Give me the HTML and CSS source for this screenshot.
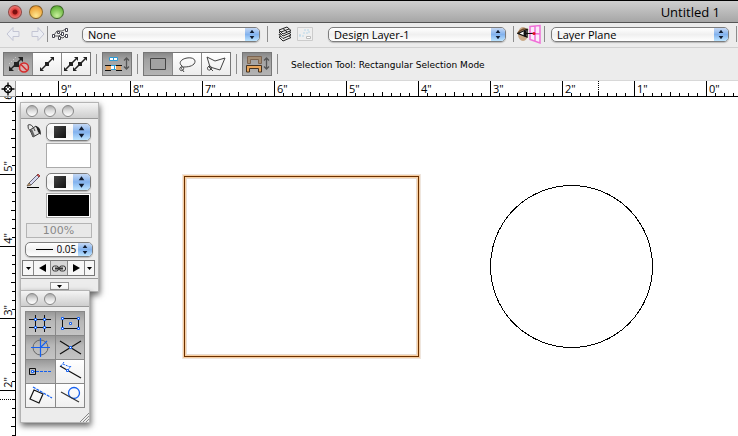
FILE: index.html
```html
<!DOCTYPE html>
<html lang="en">
<head>
  <meta charset="UTF-8">
  <meta name="viewport" content="width=device-width, initial-scale=1.0">
  <title>Untitled 1</title>
  <link rel="stylesheet" href="styles.css">
</head>
<body>
  <!-- Shared symbols -->
  <svg class="symbols" aria-hidden="true">
    <symbol id="arrows" viewBox="0 0 15 13">
      <path d="M7.5 1.500 L10 5 H5 Z M7.5 11.500 L10 8 H5 Z" fill="#101c30"/>
    </symbol>
    <symbol id="down" viewBox="0 0 7 4">
      <path d="M0 0 H7 L3.500 4 Z" fill="#000"/>
    </symbol>
    <symbol id="resize-arrow" viewBox="0 0 7 15">
      <path d="M3.500 2 V13 M1 4.500 L3.500 2 L6 4.500 M1 10.500 L3.500 13 L6 10.500" fill="none" stroke="#555" stroke-width="1.300"/>
    </symbol>
  </svg>

  <header class="title-bar">
    <div class="lights">
      <button class="light red" aria-label="Close"></button>
      <button class="light yellow" aria-label="Minimize"></button>
      <button class="light green" aria-label="Zoom"></button>
    </div>
    <h1 class="title">Untitled 1</h1>
  </header>

  <!-- Class / layer / plane bar -->
  <nav class="view-bar">
    <div class="nav-arrows">
      <button class="plain" aria-label="Previous view">
        <svg width="15" height="16" viewBox="0 0 15 16"><path d="M1 8 L7 1.500 V5.500 H13 V10.500 H7 V14.500 Z" fill="#eceef3" stroke="#c3c5d4"/></svg>
      </button>
      <button class="plain" aria-label="Next view">
        <svg width="15" height="16" viewBox="0 0 15 16"><path d="M14 8 L8 1.500 V5.500 H2 V10.500 H8 V14.500 Z" fill="#eceef3" stroke="#c3c5d4"/></svg>
      </button>
    </div>
    <span class="divider"></span>
    <button class="plain classes" aria-label="Classes">
      <svg width="18" height="14" viewBox="0 0 18 14">
        <path d="M3 8 L6 4 H11 L15 2 M4 9 L8 9 L10 7 M8 10 L12 11 L15 8 M11 5 V9" fill="none" stroke="#555"/>
        <g fill="#fff" stroke="#44444f"><path d="M1.500 7.500h2v3h-2z M6.500 4.500h2v2h-2z M7.500 9.500h2v3h-2z M10.500 5.500h2v3h-2z M14.500 1.500h2v3h-2z M14.500 7.500h2v3h-2z"/></g>
      </svg>
    </button>
    <span class="popup">
      <select aria-label="Class"><option>None</option></select>
      <svg class="cap"><use href="#arrows"/></svg>
    </span>
    <span class="divider"></span>
    <div class="layer-icons">
      <button class="plain" aria-label="Layers">
        <svg width="15" height="16" viewBox="0 0 15 16">
          <g fill="#eee" stroke="#222">
            <path d="M1 11 L9 8 L13 11.500 L5 15 Z"/>
            <path d="M1 8.500 L9 5.500 L13 9 L5 12.500 Z"/>
            <path d="M1 6 L9 3 L13 6.500 L5 10 Z"/>
            <path d="M1 4 L9 1 L13 4.500 L5 8 Z"/>
            <path d="M5 2.500 L9 6 M3 6 L11 3"/>
          </g>
        </svg>
      </button>
      <button class="plain" aria-label="Saved views">
        <svg width="16" height="14" viewBox="0 0 16 14">
          <path d="M.5 .5h15v13H.5z" fill="#efefef" stroke="#ccc"/>
          <path d="M9.500 9.500h4v2h-4z" fill="#fff" stroke="#bbb"/>
          <path d="M2 9 H8 M3 9 V6 M6 6 H12 V3 H7" fill="none" stroke="#b9d8ea" stroke-dasharray="2 1"/>
        </svg>
      </button>
    </div>
    <span class="popup">
      <select aria-label="Layer"><option>Design Layer-1</option></select>
      <svg class="cap"><use href="#arrows"/></svg>
    </span>
    <span class="divider"></span>
    <button class="plain plane" aria-label="Look at plane">
      <svg width="24" height="20" viewBox="0 0 24 20">
        <ellipse cx="6" cy="10" rx="5" ry="7" fill="#c9a987"/>
        <path d="M0.500 9.500 Q6 3 11 6" fill="none" stroke="#6b4a2a" stroke-width="1.500"/>
        <path d="M1 9.500 L10 5.500 V13 Z" fill="#fff" stroke="#111" stroke-width="1.300"/>
        <ellipse cx="8" cy="9.500" rx="1.500" ry="3" fill="#111"/>
        <path d="M13 2.500 L23 1.500 V19 L13 15.500 Z M18 2 V17 M13 9 L23 10" fill="#fbeafa" stroke="#f070d8" stroke-width="1.500"/>
        <path d="M9 9.500 H17" stroke="#111"/>
        <circle cx="17" cy="9.500" r="1.500" fill="#e01020"/>
      </svg>
    </button>
    <span class="divider"></span>
    <span class="popup">
      <select aria-label="Plane"><option>Layer Plane</option></select>
      <svg class="cap"><use href="#arrows"/></svg>
    </span>
    <span class="divider"></span>
  </nav>

  <!-- Selection tool modes -->
  <div class="tool-bar">
    <div class="modes">
      <button class="mode on" aria-label="Disable interactive scaling">
        <svg width="28" height="22" viewBox="0 0 28 22">
          <path d="M7 16 L17 6" stroke="#222" stroke-width="1.500"/>
          <path d="M5 18 V13 L10 18 Z M19 4 V9 L14 4 Z M10 9h5v5h-5z" fill="#222"/>
          <path d="M5 11 L12 4 M14 18 L20 12" stroke="#ddd" stroke-dasharray="1 2"/>
          <circle cx="20" cy="14.500" r="4.500" fill="#d8b0b0" stroke="#d52a2a" stroke-width="1.500"/>
          <path d="M17 11.500 L23 17.500" stroke="#d52a2a" stroke-width="1.500"/>
        </svg>
      </button>
      <button class="mode" aria-label="Single object scaling">
        <svg width="28" height="22" viewBox="0 0 28 22">
          <path d="M9 16 L19 6" stroke="#222" stroke-width="1.500"/>
          <path d="M7 18 V14 L11 18 Z M21 4 V8 L17 4 Z M12 9h4v4h-4z" fill="#222"/>
        </svg>
      </button>
      <button class="mode" aria-label="Unrestricted scaling">
        <svg width="28" height="22" viewBox="0 0 28 22">
          <path d="M4 16 L14 6 M13 16 L23 6" stroke="#222" stroke-width="1.500"/>
          <path d="M2 18 V14 L6 18 Z M16 4 V8 L12 4 Z M7 9h4v4H7z M11 18 V14 L15 18 Z M25 4 V8 L21 4 Z M16 9h4v4h-4z" fill="#222"/>
        </svg>
      </button>
    </div>
    <span class="divider"></span>
    <div class="modes">
      <button class="mode on" aria-label="Wall insertion">
        <svg width="28" height="22" viewBox="0 0 28 22">
          <path d="M6.500 4.500h4v3h-4z M10.500 4.500h4v3h-4z" fill="#fff" stroke="#2b9bd6"/>
          <path d="M7 12.500h9v4H7z M11.500 12 V17" fill="#fff" stroke="#2b9bd6"/>
          <path d="M2 12.500h6 M2 17.500h6 M13 12.500h6 M13 17.500h6" stroke="#111"/>
          <path d="M3 13h5v4H3z M13 13h5v4h-5z" fill="#e0a263"/>
          <use href="#resize-arrow" x="20" y="3" width="7" height="15"/>
        </svg>
      </button>
    </div>
    <span class="divider"></span>
    <div class="modes">
      <button class="mode on" aria-label="Rectangular selection">
        <svg width="28" height="22" viewBox="0 0 28 22"><path d="M6.500 5.500h15v11h-15z" fill="#a2a2a2" stroke="#444"/></svg>
      </button>
      <button class="mode" aria-label="Lasso selection">
        <svg width="28" height="22" viewBox="0 0 28 22">
          <path d="M9 13 C5 10 8 6 14 5 C20 4 24 7 21 11 C18 14 13 14 9 14 M8 14 C5 16 8 19 10 17 C12 15 9 12 8 14 C8 16 10 17 11 19" fill="none" stroke="#444"/>
        </svg>
      </button>
      <button class="mode" aria-label="Polygonal selection">
        <svg width="28" height="22" viewBox="0 0 28 22">
          <path d="M8 14 L5 4 L13 8 L23 5 L18 17 L8 14 M7 13 C4 15 6 18 8 17 C11 15 9 12 7 14 L11 18" fill="none" stroke="#444"/>
        </svg>
      </button>
    </div>
    <span class="divider"></span>
    <div class="modes">
      <button class="mode on" aria-label="Marquee touch">
        <svg width="28" height="22" viewBox="0 0 28 22">
          <path d="M4.500 10.500 V3.500 H18.500 V10.500 H15.500 V6.500 H7.500 V10.500 Z" fill="#a58e74" stroke="#7c6450"/>
          <path d="M3.500 19 V12.500 H18.500 V19 H15.500 V15.500 H6.500 V19 Z" fill="#e8a55a" stroke="#443322"/>
          <use href="#resize-arrow" x="20" y="3" width="7" height="15"/>
        </svg>
      </button>
    </div>
    <span class="divider"></span>
    <p class="hint">Selection Tool: Rectangular Selection Mode</p>
  </div>

  <main class="workspace">
    <button class="origin" aria-label="Set origin">
      <svg width="15" height="15" viewBox="0 0 15 15">
        <circle cx="8" cy="8" r="3.500" fill="#fff" stroke="#000" stroke-width="1.500"/>
        <path d="M8 1.500 V7 M8 9 V14.500 M1.500 8 H7 M9 8 H14.500" stroke="#000" stroke-width="1.300"/>
      </svg>
    </button>
    <ol class="ruler-top">
      <li>9"</li><li>8"</li><li>7"</li><li>6"</li><li>5"</li><li>4"</li><li>3"</li><li class="marked">2"</li><li>1"</li><li>0"</li>
    </ol>
    <ol class="ruler-left">
      <li><span>6"</span></li><li><span>5"</span></li><li><span>4"</span></li><li><span>3"</span></li><li><span>2"</span></li><li class="marked"></li>
    </ol>

    <div class="canvas">
      <div class="shape-rect"></div>
      <svg class="shape-circle" width="163" height="163" viewBox="0 0 163 163">
        <circle cx="81.500" cy="81.500" r="81" fill="none" stroke="#000" shape-rendering="crispEdges"/>
      </svg>

      <!-- Attributes palette -->
      <section class="palette attributes">
        <div class="palette-bar">
          <button aria-label="Close"></button>
          <button aria-label="Minimize"></button>
          <button aria-label="Zoom"></button>
        </div>
        <div class="attr-body">
          <div class="attr-row">
            <svg width="16" height="16" viewBox="0 0 16 16">
              <path d="M4 7 L10 3 L14 10 L7 14 Z" fill="#ddd" stroke="#333"/>
              <path d="M4 7 L7 14 L9 13 L6 6 Z" fill="#666"/>
              <path d="M10 3 Q15 4 15 12 L12 9 Z" fill="#222"/>
              <path d="M2 2 Q6 0 9 8 M2 2 Q1 5 5 9" fill="none" stroke="#444"/>
            </svg>
            <div class="attr-controls">
              <span class="popup style">
                <select aria-label="Fill style"><option>Solid</option></select>
                <svg class="cap"><use href="#arrows"/></svg>
              </span>
              <button class="swatch" aria-label="Fill color"></button>
            </div>
          </div>
          <div class="attr-row">
            <svg width="16" height="16" viewBox="0 0 16 16">
              <path d="M3 10 L11 2 L13 4 L5 12 Z" fill="#d6d8ee" stroke="#667"/>
              <path d="M11 2 L12 1 L14 3 L13 4 Z" fill="#d66" stroke="#944"/>
              <path d="M3 10 L5 12 L1 13 Z" fill="#d2a36a" stroke="#765"/>
              <path d="M1 14.500 H13" stroke="#000"/>
            </svg>
            <div class="attr-controls">
              <span class="popup style">
                <select aria-label="Pen style"><option>Solid</option></select>
                <svg class="cap"><use href="#arrows"/></svg>
              </span>
              <button class="swatch black" aria-label="Pen color"></button>
            </div>
          </div>
          <input class="opacity" type="text" value="100%" aria-label="Opacity" disabled>
          <span class="popup weight">
            <select aria-label="Line thickness"><option>0.05</option></select>
            <svg class="cap"><use href="#arrows"/></svg>
          </span>
          <div class="markers">
            <button aria-label="Start marker list"><svg width="5" height="3" viewBox="0 0 7 4"><use href="#down"/></svg></button>
            <button class="wide" aria-label="Start marker"><svg width="7" height="8" viewBox="0 0 7 8"><path d="M7 0 V8 L0 4 Z"/></svg></button>
            <button class="wide link" aria-label="Link markers">
              <svg width="14" height="7" viewBox="0 0 14 7"><g fill="none" stroke="#333"><rect x=".5" y="1" width="6" height="5" rx="2"/><rect x="7.500" y="1" width="6" height="5" rx="2"/><path d="M3 3.500 H11" stroke-width="2"/></g></svg>
            </button>
            <button class="wide" aria-label="End marker"><svg width="7" height="8" viewBox="0 0 7 8"><path d="M0 0 V8 L7 4 Z"/></svg></button>
            <button aria-label="End marker list"><svg width="5" height="3" viewBox="0 0 7 4"><use href="#down"/></svg></button>
          </div>
        </div>
        <div class="attr-footer">
          <button aria-label="More"><svg width="5" height="3" viewBox="0 0 7 4"><use href="#down"/></svg></button>
        </div>
      </section>

      <!-- Snapping palette -->
      <section class="palette snapping">
        <div class="palette-bar">
          <button aria-label="Close"></button>
          <button aria-label="Minimize"></button>
        </div>
        <div class="snaps">
          <button class="on" aria-label="Snap to grid">
            <svg width="28" height="22" viewBox="0 0 28 22"><path d="M3 6.500 H25 M3 14.500 H25 M9.500 2 V19 M18.500 2 V19" stroke="#111"/><path d="M8.500 5.500h2v2h-2z M17.500 5.500h2v2h-2z M8.500 13.500h2v2h-2z M17.500 13.500h2v2h-2z" fill="#fff" stroke="#1560f0"/></svg>
          </button>
          <button class="on" aria-label="Snap to object">
            <svg width="28" height="22" viewBox="0 0 28 22"><path d="M6.500 5.500h16v10h-16z" fill="none" stroke="#111"/><path d="M5.500 4.500h2v2h-2z M21.500 4.500h2v2h-2z M5.500 14.500h2v2h-2z M21.500 14.500h2v2h-2z M13.500 9.500h2v2h-2z" fill="#fff" stroke="#1560f0"/></svg>
          </button>
          <button class="on" aria-label="Snap to angle">
            <svg width="28" height="22" viewBox="0 0 28 22"><circle cx="14.500" cy="10.500" r="7.500" fill="none" stroke="#666"/><path d="M5 10.500 H24 M14.500 1 V20 M14.500 10.500 L21 4" stroke="#1560f0" stroke-width="1.200"/></svg>
          </button>
          <button class="on" aria-label="Snap to intersection">
            <svg width="28" height="22" viewBox="0 0 28 22"><path d="M4 4 L25 17 M4 17 L25 4" stroke="#111" stroke-width="1.200"/><path d="M13.500 9.500h2v2h-2z" fill="#fff" stroke="#1560f0"/></svg>
          </button>
          <button class="on" aria-label="Smart points">
            <svg width="28" height="22" viewBox="0 0 28 22"><path d="M3.500 7.500h6v6h-6z" fill="none" stroke="#111"/><path d="M6 10.500 H25" stroke="#1560f0" stroke-dasharray="3 1"/><path d="M5.500 9.500h2v2h-2z" fill="#fff" stroke="#1560f0"/></svg>
          </button>
          <button aria-label="Snap to distance">
            <svg width="28" height="22" viewBox="0 0 28 22"><path d="M4 5 L25 17" stroke="#111" stroke-width="1.300"/><path d="M5 5 L8 1 M12 9 L15 5 M7 3 L14 6" stroke="#1560f0" stroke-dasharray="2 1"/><path d="M10.500 8.500h2v2h-2z" fill="#fff" stroke="#1560f0"/></svg>
          </button>
          <button aria-label="Smart edge">
            <svg width="28" height="22" viewBox="0 0 28 22"><path d="M8 5 L17 9 L13 18 L4 14 Z" fill="none" stroke="#111" stroke-width="1.200"/><path d="M7 2 L26 13" stroke="#1560f0" stroke-width="1.300" stroke-dasharray="3 1"/></svg>
          </button>
          <button aria-label="Snap to tangent">
            <svg width="28" height="22" viewBox="0 0 28 22"><circle cx="18" cy="8" r="5.500" fill="none" stroke="#1560f0" stroke-width="1.300"/><path d="M5 7 L23 17" stroke="#333" stroke-width="1.200"/></svg>
          </button>
        </div>
        <svg class="grip" width="10" height="10" viewBox="0 0 10 10"><path d="M1 10 L10 1 M4 10 L10 4 M7 10 L10 7" stroke="#888"/></svg>
      </section>
    </div>
  </main>
</body>
</html>
```
FILE: styles.css
```css
* {
  box-sizing: border-box;
}

body {
  margin: 0;
  height: 100vh;
  display: flex;
  flex-direction: column;
  overflow: hidden;
  font-family: "Open Sans", "Noto Sans", sans-serif;
  font-size: 11px;
  color: #000;
  background: #fff;
}

button {
  display: flex;
  align-items: center;
  justify-content: center;
  margin: 0;
  padding: 0;
  border: none;
}

svg {
  display: block;
  flex: none;
}

.symbols {
  position: absolute;
  width: 0;
  height: 0;
}

/* Title bar */
.title-bar {
  flex: none;
  display: flex;
  align-items: center;
  justify-content: space-between;
  height: 23px;
  padding: 0 18px 0 8px;
  border-top: 1px solid #000;
  border-bottom: 1px solid #555;
  background: linear-gradient(#cfcfcf, #a6a6a6);
}

.lights {
  display: flex;
  gap: 7px;
}

.light {
  width: 14px;
  height: 14px;
  border-radius: 50%;
  border: 1px solid rgba(0, 0, 0, 0.4);
}

.red {
  background: radial-gradient(circle at 50% 50%, #7a1010 0 2px, #e0403c 3px, #f0908a 7px);
}

.yellow {
  background: radial-gradient(circle at 50% 80%, #ffe790, #efa63c 70%, #c87a28);
}

.green {
  background: radial-gradient(circle at 50% 80%, #c8f09c, #6cb842 70%, #468c2c);
}

.title {
  margin: 0;
  font-size: 13px;
  line-height: 20px;
  font-weight: normal;
}

/* View bar */
.view-bar {
  flex: none;
  display: flex;
  align-items: center;
  height: 25px;
  padding: 0 1px 2px 6px;
  border-bottom: 1px solid #d0d0d0;
  background: #ececec;
}

.view-bar .popup {
  flex: 1;
  margin-right: 7px;
}

.divider {
  flex: none;
  width: 1px;
  height: 16px;
  background: #8c8c8c;
}

.plain {
  background: none;
}

.nav-arrows {
  display: flex;
  gap: 9px;
  margin-right: 2px;
}

.classes {
  margin: 0 13px 0 3px;
}

.layer-icons {
  display: flex;
  align-items: center;
  gap: 4px;
  margin: 0 15px 0 10px;
}

.plane {
  margin: 0 3px;
}

.plane + .divider {
  margin-right: 6px;
}

/* Drop-downs with the blue arrow cap */
.popup {
  display: grid;
  height: 15px;
  border: 1px solid #7d7d7d;
  border-radius: 5px;
  overflow: hidden;
  background: linear-gradient(#fff, #f0f0f0 50%, #fff);
  box-shadow: 0 1px 1px #bbb;
}

.popup select,
.popup .cap {
  grid-area: 1 / 1;
}

.popup select {
  appearance: none;
  width: 100%;
  height: 13px;
  margin: 0;
  padding: 0 16px 0 5px;
  border: none;
  background: none;
  font: inherit;
  line-height: 13px;
  color: #000;
}

.cap {
  justify-self: end;
  width: 14px;
  height: 100%;
  background: linear-gradient(#c5d8f4, #82b2ee 50%, #bce4ff);
  pointer-events: none;
}

/* Tool bar */
.tool-bar {
  flex: none;
  display: flex;
  align-items: center;
  gap: 5px;
  height: 33px;
  padding: 0 3px 1px;
  border-bottom: 1px solid #d8d8d8;
  background: #ececec;
}

.tool-bar .divider {
  height: 20px;
}

.modes {
  display: flex;
  height: 24px;
  border: 1px solid #777;
}

.mode {
  width: 28px;
  background: linear-gradient(#fff, #ececec);
}

.mode + .mode {
  width: 29px;
  border-left: 1px solid #888;
}

.mode.on {
  background: linear-gradient(#888, #a2a2a2 30%, #b4b4b4);
}

.hint {
  margin: 2px 0 0 8px;
  font-family: "DejaVu Sans", sans-serif;
  font-size: 9px;
  white-space: nowrap;
}

/* Rulers */
.workspace {
  flex: 1;
  min-height: 0;
  display: grid;
  grid-template: 16px 1fr / 16px 1fr;
}

.origin {
  border-right: 1px solid #999;
  border-bottom: 1px solid #999;
  background: #eee;
}

.ruler-top,
.ruler-left {
  margin: 0;
  padding: 0;
  list-style: none;
  overflow: hidden;
  font-size: 11px;
  line-height: 15px;
}

.ruler-top {
  display: flex;
  padding-left: 42px;
  border-bottom: 1px solid #000;
  background:
    linear-gradient(90deg, #000 1px, transparent 1px) 6px 100% / 9px 3px repeat-x,
    linear-gradient(90deg, #000 1px, transparent 1px) 6px 100% / 36px 4px repeat-x,
    #fff;
}

.ruler-top li {
  flex: none;
  width: 72px;
  padding-left: 2px;
  border-left: 1px solid #000;
}

.ruler-top .marked {
  background: repeating-linear-gradient(#000 0 1px, transparent 1px 2px) 35px 0 / 1px 100% no-repeat;
}

.ruler-left {
  display: flex;
  flex-direction: column;
  border-right: 1px solid #000;
  background:
    linear-gradient(#000 1px, transparent 1px) 100% 5px / 3px 9px repeat-y,
    linear-gradient(#000 1px, transparent 1px) 100% 5px / 4px 36px repeat-y,
    #fff;
}

.ruler-left li {
  flex: none;
  display: flex;
  align-items: flex-end;
  height: 72px;
  padding-bottom: 2px;
  border-bottom: 1px solid #000;
}

.ruler-left li:first-child {
  height: 6px;
}

.ruler-left span {
  writing-mode: vertical-rl;
  transform: rotate(180deg);
}

.ruler-left .marked {
  background: repeating-linear-gradient(90deg, #000 0 1px, transparent 1px 2px) 0 8px / 100% 1px no-repeat;
}

/* Drawing area */
.canvas {
  position: relative;
  overflow: hidden;
  background: #fff;
}

.shape-rect {
  position: absolute;
  left: 168px;
  top: 79px;
  width: 235px;
  height: 181px;
  border: 1px solid #6a3000;
  box-shadow: 0 0 0 1px #f6cda2, 0 0 0 2px #efe6de, inset 0 0 0 1px #fad0a2, inset 0 0 0 2px #e8dcd2;
}

.shape-circle {
  position: absolute;
  left: 474px;
  top: 88px;
}

/* Floating palettes */
.palette {
  position: absolute;
  left: 4px;
  border: 1px solid #b4b4b4;
  background: #ececec;
  box-shadow: 1px 3px 6px rgba(0, 0, 0, 0.6);
}

.attributes {
  top: 5px;
  width: 79px;
}

.snapping {
  top: 193px;
  width: 70px;
}

.palette-bar {
  display: flex;
  align-items: center;
  gap: 6px;
  height: 16px;
  padding-left: 5px;
  border-bottom: 1px solid #999;
  background: linear-gradient(#f4f4f4, #cecece);
}

.palette-bar button {
  width: 12px;
  height: 12px;
  border: 1px solid #888;
  border-radius: 50%;
  background: linear-gradient(#aaa, #e0e0e0 50%, #fff);
}

.attr-body {
  display: flex;
  flex-direction: column;
  align-items: center;
  padding: 4px 3px 2px 1px;
  border-bottom: 1px solid #999;
}

.attr-row {
  display: flex;
  gap: 4px;
  margin-bottom: 5px;
}

.attr-controls {
  display: flex;
  flex-direction: column;
  gap: 2px;
}

.style {
  width: 45px;
  height: 18px;
}

.popup.style select {
  height: 16px;
  color: transparent;
  background: linear-gradient(135deg, #444, #111) 7px 2px / 12px 12px no-repeat;
}

.style .cap {
  width: 17px;
}

.swatch {
  width: 45px;
  height: 25px;
  border: 1px solid #aaa;
  background: #fff;
}

.swatch.black {
  background: #000;
  box-shadow: inset 0 0 0 1px #fff;
}

.opacity {
  width: 66px;
  height: 15px;
  padding: 0;
  border: 1px solid #b4b4b4;
  background: #e8e8e8;
  font-family: "DejaVu Sans", sans-serif;
  font-size: 11px;
  text-align: center;
  color: #888;
}

.weight {
  width: 68px;
  margin: 4px 0 3px;
}

.popup.weight select {
  padding: 0 0 0 31px;
  font-size: 10px;
  background: linear-gradient(#000, #000) 10px 6px / 17px 1px no-repeat;
}

.markers {
  display: flex;
  height: 16px;
  border: 1px solid #777;
}

.markers button {
  width: 10px;
  background: #f6f6f6;
}

.markers button + button {
  border-left: 1px solid #888;
}

.markers .wide {
  width: 17px;
}

.markers .link {
  background: #d8d8d8;
}

.attr-footer {
  display: flex;
  justify-content: center;
  padding: 3px 0 1px;
}

.attr-footer button {
  width: 19px;
  height: 8px;
  border: 1px solid #999;
  background: #fafafa;
}

.snaps {
  display: grid;
  grid-template-columns: 1fr 1fr;
  gap: 1px;
  margin: 4px 4px 4px;
  padding: 1px;
  background: #888;
}

.snaps button {
  height: 23px;
  overflow: hidden;
  background: linear-gradient(#fff, #f0f0f0);
}

.snaps .on {
  background: linear-gradient(#999, #b8b8b8 40%, #c4c4c4);
}

.grip {
  margin-left: auto;
}
```
